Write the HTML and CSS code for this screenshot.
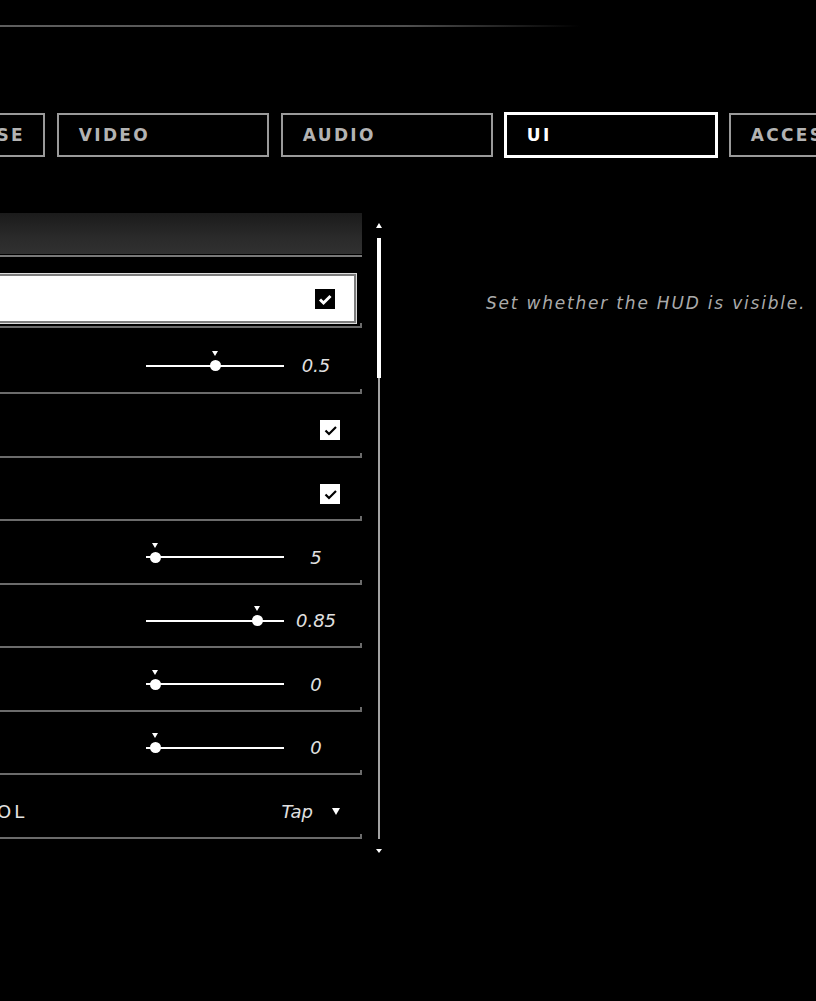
FILE: index.html
```html
<!DOCTYPE html>
<html lang="en">
<head>
<meta charset="utf-8">
<title>Settings — UI</title>
<link rel="stylesheet" href="styles.css">
</head>
<body>
<div class="screen">
  <div class="top-rule"></div>

  <nav class="tabs">
    <div class="tab">KEYBOARD/MOUSE</div>
    <div class="tab">VIDEO</div>
    <div class="tab">AUDIO</div>
    <div class="tab tab--active">UI</div>
    <div class="tab">ACCESSIBILITY</div>
  </nav>

  <main class="content">
    <section class="panel">
      <div class="panel-head"><div class="panel-head-bar"></div></div>

      <div class="row row--selected">
        <div class="row-frame">
          <span class="row-label">SHOW HUD</span>
          <svg class="check" viewBox="0 0 20 20"><rect width="20" height="20" fill="#000"/><path d="M5 10.5l3.5 3.5 7-7" fill="none" stroke="#fff" stroke-width="3"/></svg>
        </div>
      </div>

      <div class="row row--tall">
        <span class="row-label">HUD OPACITY</span>
        <div class="slider" style="--v:0.5"><span class="slider-track"></span><span class="slider-knob"></span></div>
        <span class="value">0.5</span>
      </div>

      <div class="row">
        <span class="row-label">CROSSHAIR</span>
        <svg class="check" viewBox="0 0 20 20"><rect width="20" height="20" fill="#fff"/><path d="M5.5 10.5l3.5 3.5 7-7" fill="none" stroke="#000" stroke-width="2.2"/></svg>
      </div>

      <div class="row">
        <span class="row-label">HIT MARKERS</span>
        <svg class="check" viewBox="0 0 20 20"><rect width="20" height="20" fill="#fff"/><path d="M5.5 10.5l3.5 3.5 7-7" fill="none" stroke="#000" stroke-width="2.2"/></svg>
      </div>

      <div class="row">
        <span class="row-label">CHAT LINES</span>
        <div class="slider" style="--v:0"><span class="slider-track"></span><span class="slider-knob"></span></div>
        <span class="value">5</span>
      </div>

      <div class="row">
        <span class="row-label">CHAT ALPHA</span>
        <div class="slider" style="--v:0.85"><span class="slider-track"></span><span class="slider-knob"></span></div>
        <span class="value">0.85</span>
      </div>

      <div class="row">
        <span class="row-label">OFFSET X</span>
        <div class="slider" style="--v:0"><span class="slider-track"></span><span class="slider-knob"></span></div>
        <span class="value">0</span>
      </div>

      <div class="row">
        <span class="row-label">OFFSET Y</span>
        <div class="slider" style="--v:0"><span class="slider-track"></span><span class="slider-knob"></span></div>
        <span class="value">0</span>
      </div>

      <div class="row">
        <span class="row-label">SCOREBOARD CONTROL</span>
        <div class="dropdown"><span class="dropdown-value">Tap</span><span class="dropdown-arrow"></span></div>
      </div>
    </section>

    <div class="scrollbar">
      <span class="scroll-arrow scroll-arrow--up"></span>
      <div class="scroll-track"><div class="scroll-thumb"></div></div>
      <span class="scroll-arrow scroll-arrow--down"></span>
    </div>

    <p class="description">Set whether the HUD is visible.</p>
  </main>
</div>
</body>
</html>
```

FILE: styles.css
```css
html, body {
  margin: 0;
  padding: 0;
  background: #000;
  overflow: hidden;
}

.screen {
  width: 100%;
  height: 100vh;
  overflow: hidden;
  font-family: "DejaVu Sans", "Liberation Sans", sans-serif;
  color: #e2e2e2;
}

.top-rule {
  margin-top: 25px;
  width: 580px;
  height: 2px;
  background: linear-gradient(to right, #5e5e5e 0%, #505050 70%, rgba(60,60,60,0) 100%);
}

/* Tabs */
.tabs {
  display: flex;
  gap: 12px;
  margin-top: 86px;
  margin-left: -209px;
  height: 44px;
}

.tab {
  flex: none;
  box-sizing: border-box;
  min-width: 212px;
  height: 44px;
  border: 2px solid #9a9a9a;
  padding: 0 18px 0 20px;
  display: flex;
  align-items: center;
  font-weight: bold;
  font-size: 17px;
  letter-spacing: 2.3px;
  color: #b3b3b3;
  white-space: nowrap;
}

.tab--active {
  min-width: 214px;
  height: 46px;
  margin: -1px;
  border: 3px solid #fff;
  color: #fff;
}

/* Content */
.content {
  display: flex;
  align-items: flex-start;
  margin-top: 56px;
}

.panel {
  flex: none;
  width: 633px;
  margin-left: -271px;
}

.panel-head {
  padding-bottom: 1px;
  border-bottom: 2px solid #787878;
}

.panel-head-bar {
  height: 41px;
  background: linear-gradient(to bottom, #1b1b1b 0%, #2a2a2a 60%, #313131 100%);
}

.row {
  position: relative;
  box-sizing: border-box;
  height: 63.5px;
  padding: 11px 22px 0 24px;
  border-bottom: 2px solid #6b6b6b;
  display: flex;
  align-items: center;
}

.row::after {
  content: "";
  position: absolute;
  right: 0;
  bottom: -2px;
  width: 2px;
  height: 5px;
  background: #6b6b6b;
}

.row--tall {
  height: 66px;
}

.row--selected {
  height: 71px;
  padding: 16px 0 2px 0;
  align-items: stretch;
}

.row-frame {
  flex: 1;
  display: flex;
  align-items: center;
  margin-right: 5px;
  padding: 0 21px 0 23px;
  border: 1px solid #dcdcdc;
  box-shadow: inset 0 0 0 2px #7c7c7c;
  background: #fff;
}

.row-label {
  flex: 1;
  font-size: 18px;
  letter-spacing: 3px;
  color: #e4e4e4;
  white-space: nowrap;
}

.row-frame .row-label {
  color: #000;
}

.check {
  flex: none;
  width: 20px;
  height: 20px;
  display: block;
}

/* Slider */
.slider {
  --v: 0;
  flex: none;
  position: relative;
  width: 138px;
  height: 24px;
  margin-right: 8px;
}

.slider-track {
  position: absolute;
  left: 0;
  right: 0;
  top: 11px;
  height: 2px;
  background: #fff;
}

.slider-knob {
  position: absolute;
  left: calc(9px + 120px * var(--v));
  top: 12px;
  width: 11px;
  height: 11px;
  margin: -5.5px 0 0 -5.5px;
  border-radius: 50%;
  background: #fff;
}

.slider-knob::before {
  content: "";
  position: absolute;
  left: 50%;
  top: -9px;
  margin-left: -3.5px;
  border-left: 3.5px solid transparent;
  border-right: 3.5px solid transparent;
  border-top: 5px solid #fff;
}

.value {
  flex: none;
  width: 48px;
  text-align: center;
  font-size: 18px;
  font-style: italic;
  color: #e0e0e0;
}

/* Dropdown */
.dropdown {
  flex: none;
  display: flex;
  align-items: center;
  gap: 19px;
}

.dropdown-value {
  font-size: 18px;
  font-style: italic;
  color: #e0e0e0;
}

.dropdown-arrow {
  width: 0;
  height: 0;
  border-left: 4px solid transparent;
  border-right: 4px solid transparent;
  border-top: 7px solid #fff;
}

/* Scrollbar */
.scrollbar {
  flex: none;
  width: 6px;
  margin-left: 14px;
  padding-top: 10px;
  display: flex;
  flex-direction: column;
  align-items: center;
}

.scroll-arrow {
  width: 0;
  height: 0;
  border-left: 3px solid transparent;
  border-right: 3px solid transparent;
}

.scroll-arrow--up {
  border-bottom: 5px solid #fff;
}

.scroll-arrow--down {
  margin-top: 10px;
  border-top: 4px solid #fff;
}

.scroll-track {
  position: relative;
  margin-top: 10px;
  width: 2px;
  height: 601px;
  background: #a3a3a3;
}

.scroll-thumb {
  position: absolute;
  left: -1px;
  top: 0;
  width: 4px;
  height: 140px;
  background: #fff;
}

/* Description */
.description {
  margin: 80px 0 0 104px;
  font-size: 17px;
  line-height: 20px;
  font-style: italic;
  letter-spacing: 1.8px;
  color: #aaaaaa;
  white-space: nowrap;
}
```
